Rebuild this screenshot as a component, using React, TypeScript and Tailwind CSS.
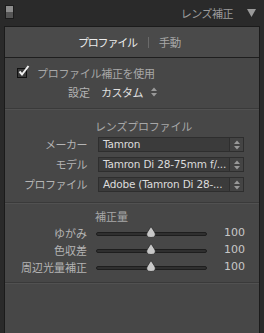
import React from "react";

const jp = { fontFamily: '"Noto Sans CJK JP", "Noto Sans", sans-serif' };
const lat = { fontFamily: '"DejaVu Sans", "Noto Sans CJK JP", sans-serif' };

function UpDown({ className = "" }: { className?: string }) {
  return (
    <svg width="6" height="10" viewBox="0 0 6 10" className={className}>
      <path d="M0 4 L3 0.5 L6 4 Z" fill="#9a9a9a" />
      <path d="M0 6 L3 9.5 L6 6 Z" fill="#9a9a9a" />
    </svg>
  );
}

function Select({ text }: { text: string }) {
  return (
    <div className="flex h-[15px] w-[146px] border border-[#2e2e2e] bg-[#3b3b3b]">
      <div
        className="flex-1 overflow-hidden whitespace-nowrap pl-[4px] text-[10.5px] leading-[13px] tracking-[-0.2px] text-[#dcdcdc]"
        style={lat}
      >
        {text}
      </div>
      <div className="flex w-[14px] items-center justify-center border-l border-[#2e2e2e] bg-[#444444]">
        <UpDown />
      </div>
    </div>
  );
}

function Slider({ label }: { label: string }) {
  return (
    <div className="flex h-[16px] items-center">
      <div className="w-[82px] text-right text-[11px] leading-[16px] text-[#b4b4b4]" style={jp}>
        {label}
      </div>
      <div className="relative ml-[9px] h-[16px] w-[111px]">
        <div className="absolute left-0 right-0 top-[7px] h-[4px] rounded-full border border-[#1e1e1e] bg-[#2f2f2f]" />
        <div className="absolute left-[50px] top-[1px]">
          <svg width="10" height="12" viewBox="0 0 10 12">
            <path d="M5 0.5 L8.5 6 Q10 8 9 10 Q8 11.5 5 11.5 Q2 11.5 1 10 Q0 8 1.5 6 Z" fill="#c8c8c8" stroke="#222" strokeWidth="0.7" />
          </svg>
        </div>
      </div>
      <div className="ml-[17px] w-[20px] text-right text-[11px] leading-[16px] text-[#c8c8c8]" style={lat}>
        100
      </div>
    </div>
  );
}

function Separator() {
  return <div className="h-[2px] border-t border-[#3a3a3a] border-b-[#515151] border-b" />;
}

export default function App() {
  return (
    <div className="h-[333px] w-[264px] overflow-hidden bg-[#2a2a2a]" style={jp}>
      {/* header */}
      <div className="relative flex h-[26px] items-center">
        <div className="absolute left-[5px] top-[5px] flex h-[14px] w-[9px] flex-col border border-[#1c1c1c]">
          <div className="flex-1 bg-[#8c8c8c]" />
          <div className="flex-1 bg-[#555555]" />
        </div>
        <div className="ml-auto mr-[31px] text-[11px] leading-[14px] tracking-[-0.5px] text-[#9c9c9c]">レンズ補正</div>
        <svg width="9" height="8" viewBox="0 0 9 8" className="absolute left-[247px] top-[9px]">
          <path d="M0 0 L9 0 L4.5 8 Z" fill="#9a9a9a" />
        </svg>
      </div>
      {/* panel */}
      <div className="ml-[4px] h-[307px] w-[256px] border-x border-t border-[#1b1b1b] bg-[#474747]">
        {/* tabs */}
        <div className="flex h-[31px] items-center border-b border-[#1e1e1e] bg-[#4a4a4a]">
          <span className="ml-[73px] text-[11px] leading-[14px] tracking-[-1.2px] text-[#ececec]">プロファイル</span>
          <span className="ml-[11px] h-[11px] w-[1px] bg-[#6a6a6a]" />
          <span className="ml-[10px] text-[11.5px] leading-[14px] tracking-[-0.5px] text-[#a8a8a8]">手動</span>
        </div>
        {/* profile correction */}
        <div className="h-[50px] pt-[8px]">
          <div className="flex items-center">
            <div className="relative ml-[12px] h-[10px] w-[10px] border border-[#111] bg-[#3a3a3a]">
              <svg width="12" height="12" viewBox="0 0 12 12" className="absolute -top-[4px] left-[0px]">
                <path d="M1.5 6.5 L4 9.5 L10.5 1" fill="none" stroke="#f0f0f0" strokeWidth="2" />
              </svg>
            </div>
            <span className="ml-[10px] text-[11px] leading-[14px] tracking-[-0.3px] text-[#a8a8a8]">プロファイル補正を使用</span>
          </div>
          <div className="mt-[5px] flex items-center">
            <span className="ml-[63px] text-[11px] leading-[14px] text-[#b4b4b4]">設定</span>
            <span className="ml-[11px] text-[11px] leading-[14px] tracking-[-0.5px] text-[#e0e0e0]">カスタム</span>
            <UpDown className="ml-[8px]" />
          </div>
        </div>
        <Separator />
        {/* lens profile */}
        <div className="h-[92px] pt-[9px]">
          <div className="ml-[90px] text-[11px] leading-[14px] tracking-[-0.2px] text-[#a8a8a8]">レンズプロファイル</div>
          <div className="mt-[4px] flex flex-col gap-[5px]">
            {[
              ["メーカー", "Tamron"],
              ["モデル", "Tamron Di 28-75mm f/..."],
              ["プロファイル", "Adobe (Tamron Di 28-..."],
            ].map(([l, v]) => (
              <div key={l} className="flex items-center">
                <div className="w-[82px] text-right text-[11px] leading-[15px] tracking-[-0.5px] text-[#b4b4b4]">{l}</div>
                <div className="ml-[11px]">
                  <Select text={v} />
                </div>
              </div>
            ))}
          </div>
        </div>
        <Separator />
        {/* amount */}
        <div className="h-[78px] pt-[5px]">
          <div className="ml-[90px] text-[11px] leading-[14px] text-[#a8a8a8]">補正量</div>
          <div className="mt-[2px] flex flex-col gap-[1px]">
            <Slider label="ゆがみ" />
            <Slider label="色収差" />
            <Slider label="周辺光量補正" />
          </div>
        </div>
        <Separator />
      </div>
    </div>
  );
}
